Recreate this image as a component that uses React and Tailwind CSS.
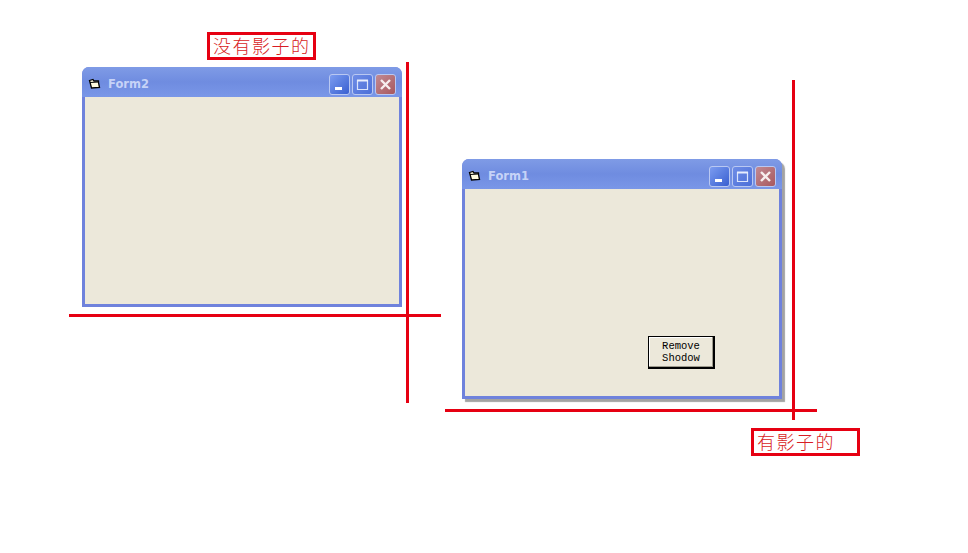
import React from 'react';

const cjk = "font-['Noto_Sans_CJK_SC',sans-serif]";

const FolderIcon = () => (
  <svg width="13" height="12" viewBox="0 0 13 12" className="shrink-0 -translate-y-px -translate-x-px">
    <path d="M1.5 2.5 L5 1.5 L6 3 L10.5 3 L10.5 4.5 L11.5 9.5 L3.5 10 L1.5 2.5 Z" fill="#fffbe0" stroke="#000" strokeWidth="1.3" />
    <path d="M2 4.5 L10.5 4" stroke="#000" strokeWidth="1" fill="none" />
  </svg>
);

const CaptionButton = ({ kind }) => {
  const tone = {
    min: 'bg-gradient-to-br from-[#7c9cf0] to-[#3a5fd0]',
    max: 'bg-gradient-to-br from-[#6f8de6] to-[#4c6fd8]',
    close: 'bg-gradient-to-br from-[#c08a94] to-[#a8585e]',
  }[kind];
  return (
    <div className={`w-[21px] h-[21px] rounded-[3px] border border-[#b9c8f2] ${tone} flex items-center justify-center`}>
      <svg width="15" height="15" viewBox="0 0 15 15">
        {kind === 'min' && <rect x="3" y="10" width="7" height="3" fill="#fff" />}
        {kind === 'max' && (
          <path d="M2.5 3.5 H12.5 V12.5 H2.5 Z" fill="none" stroke="#dbe4fb" strokeWidth="1.2" />
        )}
        {kind === 'max' && <rect x="2" y="2.5" width="11" height="2" fill="#e8eefd" />}
        {kind === 'close' && (
          <path d="M3 3 L12 12 M12 3 L3 12" stroke="#f6eeee" strokeWidth="2.4" />
        )}
      </svg>
    </div>
  );
};

const XpWindow = ({ title, className, children }) => (
  <div className={`absolute w-[320px] h-[240px] flex flex-col rounded-t-[7px] bg-[#6f82dc] ${className}`}>
    <div className="h-[30px] shrink-0 flex items-center pl-[7px] pr-[6px] pt-[5px] rounded-t-[7px] bg-gradient-to-b from-[#7f9be6] via-[#6f8ce0] to-[#7a97e8]">
      <FolderIcon />
      <span className="ml-[6px] text-[11.5px] font-bold text-[#c6d3f7] font-['DejaVu_Sans',sans-serif] leading-none">{title}</span>
      <div className="ml-auto flex gap-[2px]">
        <CaptionButton kind="min" />
        <CaptionButton kind="max" />
        <CaptionButton kind="close" />
      </div>
    </div>
    <div className="relative flex-1 mx-[3px] mb-[3px] bg-[#ece8da]">{children}</div>
  </div>
);

const Label = ({ text, className }) => (
  <div className={`absolute h-[28px] border-[3px] border-[#e60012] bg-white flex items-center pl-[3px] pb-[3px] text-[18px] leading-none tracking-[1.5px] text-[#d81c24] font-light whitespace-nowrap ${cjk} ${className}`}>
    {text}
  </div>
);

export default function App() {
  return (
    <div className="relative w-[968px] h-[553px] bg-white overflow-hidden">
      <Label text="没有影子的" className="left-[207px] top-[32px] w-[109px]" />
      <Label text="有影子的" className="left-[751px] top-[428px] w-[109px]" />

      <XpWindow title="Form2" className="left-[82px] top-[67px]" />

      <XpWindow title="Form1" className="left-[462px] top-[159px] shadow-[3px_3px_1px_#a3a3a3]">
        <div className="absolute left-[183px] top-[147px] w-[67px] h-[33px] border border-r-2 border-b-2 border-black bg-[#ece8da] shadow-[inset_-1px_-1px_0_#9d9a8c,inset_1px_1px_0_#fff] flex items-center justify-center text-center text-[10.5px] leading-[12px] text-black font-['Liberation_Mono',monospace]">
          Remove<br />Shodow
        </div>
      </XpWindow>

      {/* hand drawn guide lines */}
      <div className="absolute left-[69px] top-[314px] w-[372px] h-[3px] bg-[#e60012]" />
      <div className="absolute left-[406px] top-[62px] w-[3px] h-[341px] bg-[#e60012]" />
      <div className="absolute left-[445px] top-[409px] w-[372px] h-[3px] bg-[#e60012]" />
      <div className="absolute left-[792px] top-[80px] w-[3px] h-[340px] bg-[#e60012]" />
    </div>
  );
}
